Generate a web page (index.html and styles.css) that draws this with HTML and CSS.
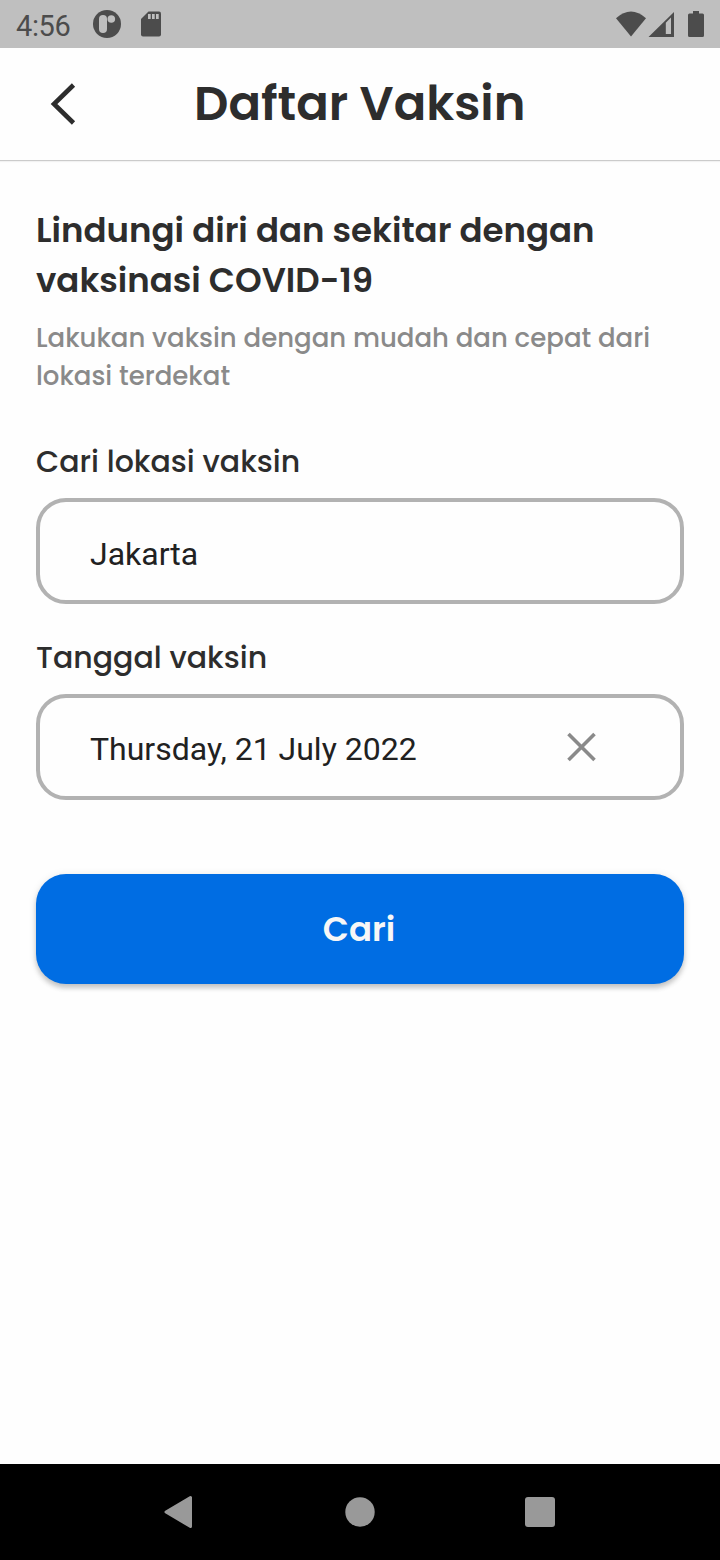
FILE: index.html
```html
<!DOCTYPE html>
<html lang="id">
<head>
<meta charset="utf-8">
<title>Daftar Vaksin</title>
<link rel="stylesheet" href="styles.css">
</head>
<body>
<div class="screen">
  <div class="status">
    <span class="clock">4:56</span>
    <svg class="status-left" width="80" height="48" viewBox="88 0 80 48">
      <circle cx="107" cy="24" r="14" fill="#4c4c4c"/>
      <rect x="99" y="15" width="8" height="18" rx="4" fill="#bfbfbf"/>
      <circle cx="111.3" cy="19" r="3.8" fill="#bfbfbf"/>
      <path d="M148.500 11.500H159q2 0 2 2V34.500q0 2-2 2H143q-2 0-2-2V19z" fill="#4c4c4c"/>
      <path d="M148 14h2.700v5H148zM152 14h2.700v5H152zM156 14h2.700v5H156z" fill="#bfbfbf"/>
    </svg>
    <svg class="status-right" width="104" height="48" viewBox="612 0 104 48">
      <path d="M616 18.200Q631 5 646 18.200L631 36.500z" fill="#4c4c4c"/>
      <path d="M674 12V37H648.500zM665.800 22.700V34H671V17.500z" fill="#4c4c4c" fill-rule="evenodd"/>
      <path d="M693 11h6v2.500h3.500q1.500 0 1.500 1.500v20.500q0 1.500-1.500 1.500h-13q-1.500 0-1.500-1.500V15q0-1.500 1.500-1.500h3.500z" fill="#4c4c4c"/>
    </svg>
  </div>
  <header class="header">
    <svg class="back" width="32" height="48" viewBox="48 80 32 48"><path d="M73.500 85L54 104l19.500 19" fill="none" stroke="#2d2d2d" stroke-width="4.600"/></svg>
    <h1 class="title">Daftar Vaksin</h1>
  </header>
  <main class="content">
    <h2 class="heading">Lindungi diri dan sekitar dengan<br>vaksinasi COVID-19</h2>
    <p class="sub">Lakukan vaksin dengan mudah dan cepat dari<br>lokasi terdekat</p>
    <div class="label label-location">Cari lokasi vaksin</div>
    <div class="field field-location"><span class="value">Jakarta</span></div>
    <div class="label label-date">Tanggal vaksin</div>
    <div class="field field-date"><span class="value">Thursday, 21 July 2022</span>
      <svg class="clear" width="30" height="30" viewBox="0 0 30 30"><path d="M2.500 2L28.500 28M28.500 2L2.500 28" stroke="#8a8a8a" stroke-width="3.600"/></svg>
    </div>
    <button class="submit"><span>Cari</span></button>
  </main>
  <nav class="nav">
    <svg width="30" height="34" viewBox="0 0 30 34"><path d="M2 17L26.500 2.500V31.500z" fill="#999" stroke="#999" stroke-width="3" stroke-linejoin="round"/></svg>
    <svg width="30" height="30" viewBox="0 0 30 30"><circle cx="15" cy="15" r="14.700" fill="#999"/></svg>
    <svg width="30" height="30" viewBox="0 0 30 30"><rect width="30" height="30" rx="3" fill="#999"/></svg>
  </nav>
</div>
</body>
</html>
```
FILE: styles.css
```css
* { box-sizing: border-box; }
body { margin: 0; background: #fefefe; }
h1, h2, p { margin: 0; }
svg { display: block; flex: none; }
.screen {
  width: 720px;
  height: 1560px;
  display: flex;
  flex-direction: column;
  overflow: hidden;
  background: #fefefe;
  color: #2d2d2d;
  font-family: Poppins, Inter, sans-serif;
  white-space: nowrap;
}
.status { height: 48px; flex: none; display: flex; align-items: center; background: #bfbfbf; padding-left: 16px; }
.clock { width: 72px; font: 400 29px/48px Roboto, sans-serif; color: #4c4c4c; padding-top: 3px; letter-spacing: -0.4px; }
.status-right { margin-left: auto; margin-right: 4px; }
.header {
  height: 113px;
  flex: none;
  display: flex;
  align-items: center;
  padding-left: 48px;
  border-bottom: 1px solid #cbcbcb;
  box-shadow: 0 1px 1px #0000000c;
}
.title { margin-left: 111px; padding-left: 3px; font-weight: 600; font-size: 48px; line-height: 72px; }
.content { flex: 1; display: flex; flex-direction: column; padding: 44px 36px 0; }
.heading { font-weight: 600; font-size: 34px; line-height: 50px; }
.sub { margin-top: 13.500px; font-weight: 500; font-size: 26px; line-height: 38px; color: #8a8a8a; }
.label { font-weight: 500; font-size: 30px; line-height: 44px; }
.label-location { margin-top: 45px; }
.label-date { margin-top: 31.500px; }
.field {
  flex: none;
  height: 106px;
  display: flex;
  align-items: center;
  justify-content: space-between;
  border: 4px solid #b2b2b2;
  border-radius: 30px;
  padding: 0 84px 0 50px;
}
.field-location { margin-top: 14.800px; }
.field-date { margin-top: 14.500px; }
.value { font: 400 32px/44px Roboto, sans-serif; color: #212121; padding-top: 4px; }
.field-location .value { padding-top: 6px; }
.clear { margin-top: -1px; }
.submit {
  flex: none;
  height: 110px;
  margin-top: 73.700px;
  border: 0;
  border-radius: 30px;
  background: #006de3;
  color: #f7f7f7;
  padding: 0 2px 0 0;
  font: 600 34px/50px Poppins, Inter, sans-serif;
  box-shadow: 0 4px 5px #00000030, 0 1px 8px #00000018;
}
.nav { height: 96px; flex: none; display: flex; align-items: center; justify-content: space-between; background: #000; padding: 0 165px 0 164px; }
```
